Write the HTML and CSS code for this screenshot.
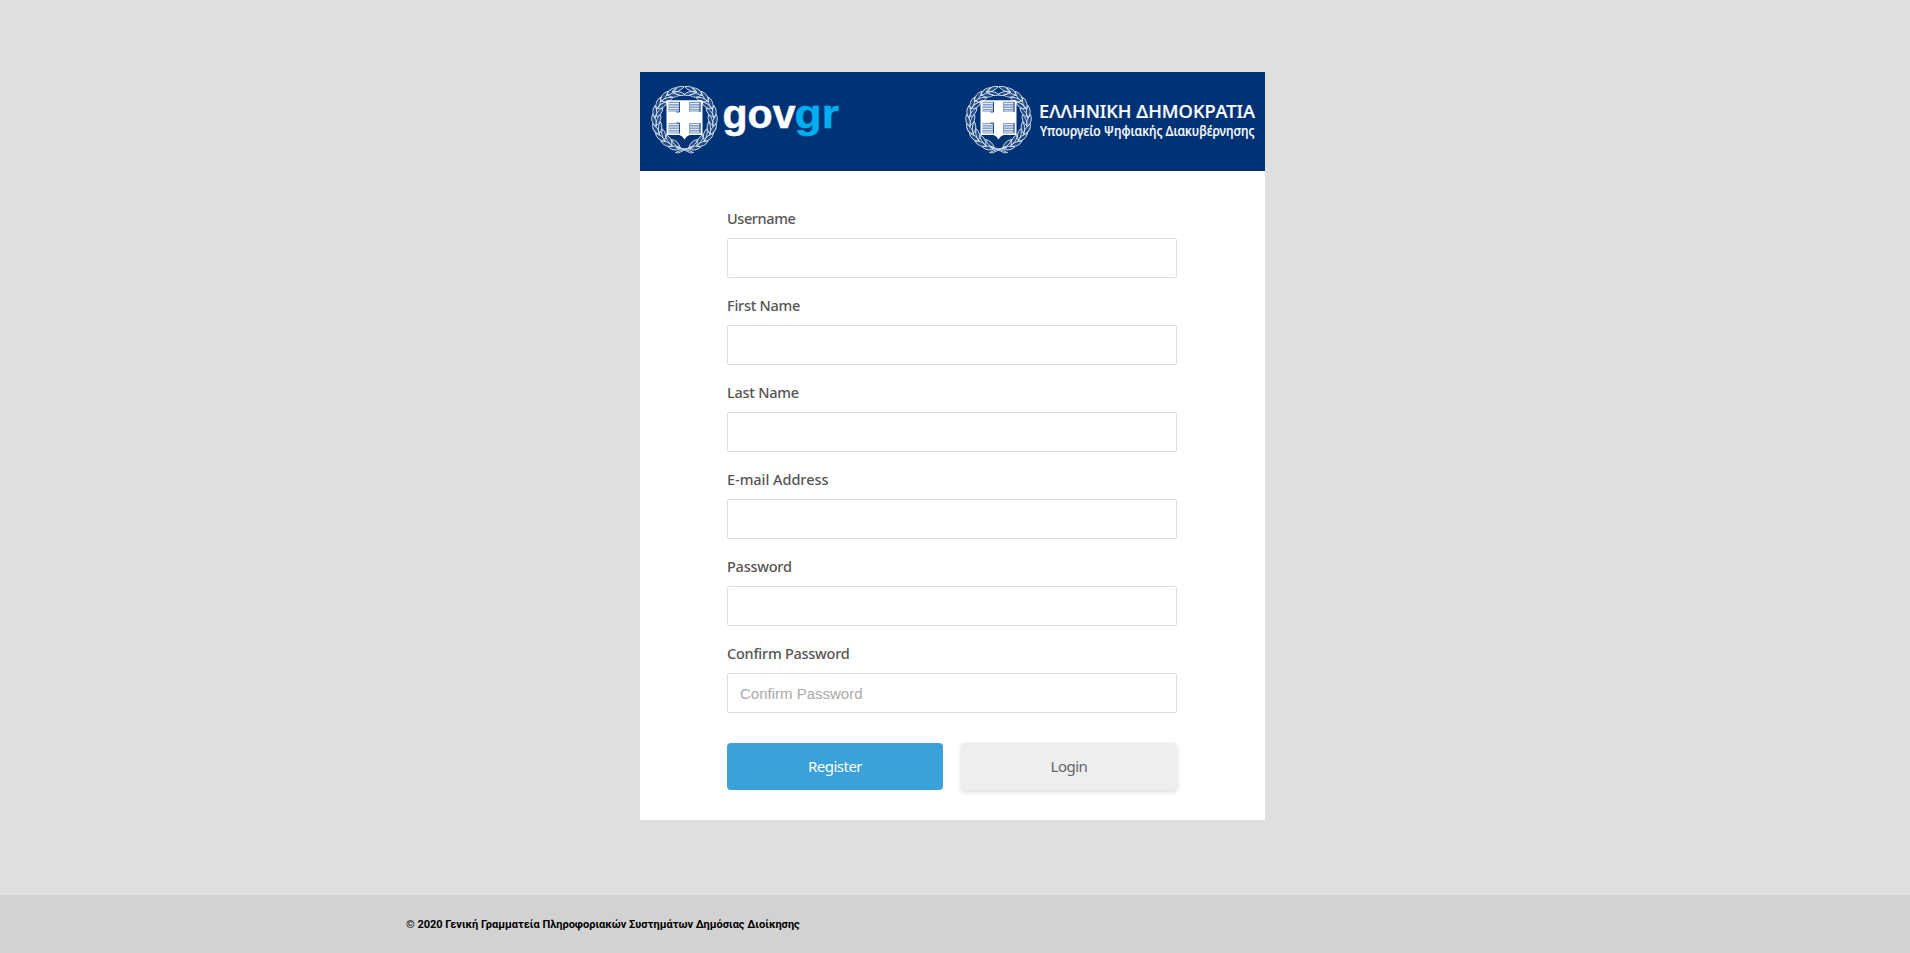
FILE: index.html
```html
<!DOCTYPE html>
<html lang="el">
<head>
<meta charset="utf-8">
<title>Register</title>
<link rel="stylesheet" href="styles.css">
</head>
<body>
<svg class="defs" width="0" height="0" aria-hidden="true">
  <defs>
    <g id="leaf">
      <path d="M-29 6Q-35 0-31.500-7Q-27 0-29 6Z"/>
      <path d="M-29 5Q-28.500-3-23.500-6Q-22.500 1-29 5Z"/>
    </g>
    <g id="branch">
      <use href="#leaf" transform="rotate(-72)"/>
      <use href="#leaf" transform="rotate(-55)"/>
      <use href="#leaf" transform="rotate(-38)"/>
      <use href="#leaf" transform="rotate(-21)"/>
      <use href="#leaf" transform="rotate(-4)"/>
      <use href="#leaf" transform="rotate(13)"/>
      <use href="#leaf" transform="rotate(30)"/>
      <use href="#leaf" transform="rotate(47)"/>
      <use href="#leaf" transform="rotate(64)"/>
      <use href="#leaf" transform="rotate(77)"/>
      <path d="M-9 28Q0 29 9 33.500L6 34Q0 30-8 29"/>
    </g>
    <symbol id="emblem" viewBox="-35 -35 70 70">
      <g fill="#9fb3d3" fill-opacity=".2" stroke="#d5deec" stroke-width=".9">
        <use href="#branch"/>
        <use href="#branch" transform="scale(-1 1)"/>
      </g>
      <path d="M-18-18.700H18V16H5Q1.500 17 0 20.500Q-1.500 17-5 16H-18Z" fill="#fff"/>
      <path d="M-16-17.200H-4.500V-7H-16ZM4.500-17.200H16V-7H4.500ZM-16 4H-4.500V14.500H-16ZM4.500 4H16V14.500H4.500Z" fill="#86a0c6"/>
      <path d="M-15.500-15.500H-5.500M-15.500-13H-5.500M-15.500-10.500H-5.500M-15.500-8H-5.500M5.500-15.500H15.500M5.500-13H15.500M5.500-10.500H15.500M5.500-8H15.500M-15.500 5.500H-5.500M-15.500 8H-5.500M-15.500 10.500H-5.500M-15.500 13H-5.500M5.500 5.500H15.500M5.500 8H15.500M5.500 10.500H15.500M5.500 13H15.500" stroke="#e4ebf5" stroke-width="1.100"/>
      <path d="M-5-17V-7H-8M15.500-17V-7M-8 4H-5V14.500M15.500 4V14" fill="none" stroke="#234c87" stroke-width="1"/>
    </symbol>
  </defs>
</svg>
<main class="page">
  <section class="card">
    <header class="banner">
      <svg class="logo" width="200" height="99" viewBox="0 0 200 99" role="img" aria-label="govgr">
        <use href="#emblem" x="9.500" y="12" width="70" height="70"/>
        <text class="gov" x="82.500" y="55.500" textLength="73" lengthAdjust="spacingAndGlyphs">gov</text>
        <text class="gov gr" x="154.500" y="55.500" textLength="44.500" lengthAdjust="spacingAndGlyphs">gr</text>
      </svg>
      <svg class="ministry" width="305" height="99" viewBox="0 0 305 99" role="img">
        <use href="#emblem" x="3.500" y="12" width="70" height="70"/>
        <text class="republic" x="79" y="46" textLength="216" lengthAdjust="spacingAndGlyphs">ΕΛΛΗΝΙΚΗ ΔΗΜΟΚΡΑΤΙΑ</text>
        <text class="department" x="80" y="64" textLength="214.500" lengthAdjust="spacingAndGlyphs">Υπουργείο Ψηφιακής Διακυβέρνησης</text>
      </svg>
    </header>
    <form class="form">
      <div class="field"><label class="tight" for="username">Username</label><input id="username" type="text"></div>
      <div class="field"><label for="first">First Name</label><input id="first" type="text"></div>
      <div class="field"><label for="last">Last Name</label><input id="last" type="text"></div>
      <div class="field"><label class="wide" for="email">E-mail Address</label><input id="email" type="text"></div>
      <div class="field"><label for="password">Password</label><input id="password" type="password"></div>
      <div class="field"><label for="confirm">Confirm Password</label><input id="confirm" type="password" placeholder="Confirm Password"></div>
      <div class="actions">
        <button class="button primary" type="button">Register</button>
        <button class="button secondary" type="button">Login</button>
      </div>
    </form>
  </section>
</main>
<footer class="footer"><p class="copyright">© 2020 Γενική Γραμματεία Πληροφοριακών Συστημάτων Δημόσιας Διοίκησης</p></footer>
</body>
</html>
```
FILE: styles.css
```css
* { box-sizing: border-box; }
body {
  margin: 0;
  min-height: 953px;
  display: flex;
  flex-direction: column;
  background: #dfdfdf;
  font-family: "Open Sans", "Noto Sans", sans-serif;
}
.defs { position: absolute; }
.page { height: 895px; padding: 72px 5px 0 0; }
.card { width: 625px; height: 748px; margin: 0 auto; background: #fff; }
.banner {
  height: 99px;
  display: flex;
  justify-content: space-between;
  background: #003375;
}
.logo, .ministry { display: block; overflow: visible; }
.gov {
  font-family: "Liberation Sans", sans-serif;
  font-size: 41px;
  font-weight: 700;
  fill: #fff;
  stroke: #fff;
  stroke-width: .5px;
}
.gr { fill: #00adef; stroke: #00adef; }
.republic { font: 500 17.800px "Noto Sans", sans-serif; fill: #fff; stroke: #fff; stroke-width: .2px; }
.department { font: 500 13.700px "Noto Sans", sans-serif; fill: #fff; stroke: #fff; stroke-width: .2px; }
.form { width: 450px; margin: 0 0 0 87px; padding-top: 35px; }
.field { height: 87px; }
.field label {
  display: block;
  height: 32px;
  font-family: "Noto Sans", sans-serif;
  font-size: 14.5px;
  font-weight: 500;
  line-height: 25px;
  letter-spacing: -0.25px;
  color: #555;
}
.field .tight { letter-spacing: -0.4px; }
.field .wide { letter-spacing: -0.05px; }
.field input {
  display: block;
  width: 450px;
  height: 40px;
  padding: 0 12px;
  border: 1px solid #ddd;
  border-radius: 2px;
  background: #fff;
  font: 15px "Liberation Sans", sans-serif;
  color: #666;
}
.field input::placeholder { color: #aaa; opacity: 1; }
.actions { display: flex; justify-content: space-between; padding-top: 15px; }
.button {
  width: 216px;
  height: 47px;
  border: 0;
  border-radius: 4px;
  padding: 0 0 2px;
  font: 15px "Noto Sans", sans-serif;
  letter-spacing: -0.5px;
}
.primary { background: #3ba1da; color: #fff; }
.secondary {
  background: #eee;
  color: #666;
  box-shadow: 0 2px 5px rgba(50, 50, 93, .18);
}
.footer { height: 58px; padding: 21px 0 0 406px; background: #d2d2d2; }
.copyright {
  margin: 0;
  font: 700 11px/18px Roboto, sans-serif;
  color: #000;
}
```
